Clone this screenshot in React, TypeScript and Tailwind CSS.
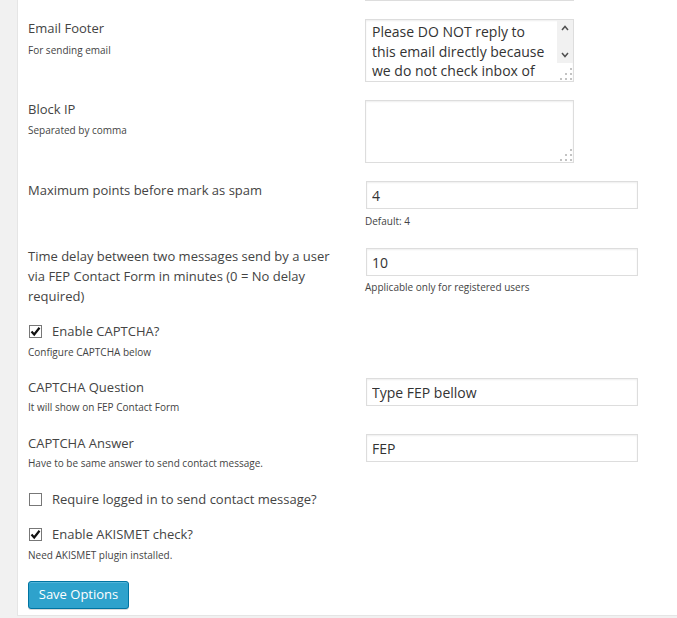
import type { ReactNode } from "react";

const labelCls = "text-[13px] leading-[20px] text-[#444]";
const descCls = "text-[10px] leading-[14px] text-[#444]";

function Grip() {
  return (
    <svg className="absolute right-0 bottom-0" width="13" height="13" viewBox="0 0 13 13">
      <rect x="10" y="0" width="2" height="2" fill="#c3c3c3" />
      <rect x="5" y="5" width="2" height="2" fill="#c3c3c3" />
      <rect x="10" y="5" width="2" height="2" fill="#c3c3c3" />
      <rect x="0" y="10" width="2" height="2" fill="#c3c3c3" />
      <rect x="5" y="10" width="2" height="2" fill="#c3c3c3" />
      <rect x="10" y="10" width="2" height="2" fill="#c3c3c3" />
    </svg>
  );
}

function TextArea({ lines, scroll }: { lines: string[]; scroll?: boolean }) {
  return (
    <div className="relative flex h-[63px] w-[209px] overflow-hidden border border-[#ddd] bg-white shadow-[inset_0_1px_2px_rgba(0,0,0,0.07)]">
      <div className="flex-1 overflow-hidden pt-[2px] pl-[6px] text-[14px] leading-[19.5px] text-[#333]">
        {lines.map((l) => (
          <div key={l} className="whitespace-nowrap">
            {l}
          </div>
        ))}
      </div>
      {scroll && (
        <div className="flex h-[43px] w-[16px] flex-col items-center justify-between bg-[#f1f1f1] py-[5px]">
          <svg width="8" height="6" viewBox="0 0 8 6">
            <path d="M1 5 L4 1.5 L7 5" fill="none" stroke="#505050" strokeWidth="1.5" />
          </svg>
          <svg width="8" height="6" viewBox="0 0 8 6">
            <path d="M1 1 L4 4.5 L7 1" fill="none" stroke="#505050" strokeWidth="1.5" />
          </svg>
        </div>
      )}
      <Grip />
    </div>
  );
}

function TextInput({ value }: { value: string }) {
  return (
    <input
      readOnly
      defaultValue={value}
      className="ml-px block h-[28px] w-[272px] border border-[#ddd] bg-white pl-[5px] text-[14px] text-[#333] shadow-[inset_0_1px_2px_rgba(0,0,0,0.07)] outline-none"
    />
  );
}

function Check({ checked, label }: { checked: boolean; label: string }) {
  return (
    <div className="flex items-center">
      <span className="mt-px ml-px flex h-[13px] w-[13px] items-center justify-center border border-[#777] bg-white">
        {checked && (
          <svg width="11" height="11" viewBox="0 0 11 11">
            <path d="M1.5 5.5 L4.2 8.5 L9.5 1.8" fill="none" stroke="#111" strokeWidth="2.2" />
          </svg>
        )}
      </span>
      <span className={`ml-[10px] ${labelCls}`}>{label}</span>
    </div>
  );
}

function Row({ h, left, right }: { h: string; left: ReactNode; right?: ReactNode }) {
  return (
    <div className={`grid grid-cols-[337px_1fr] ${h}`}>
      <div className="w-[315px]">{left}</div>
      <div>{right}</div>
    </div>
  );
}

export default function App() {
  return (
    <div className="flex h-[618px] w-[677px] overflow-hidden bg-[#f1f1f1] font-['Open_Sans',sans-serif]">
      <div className="w-[17px] shrink-0" />
      <div className="h-[616px] flex-1 border-b border-l border-[#e5e5e5] bg-white pl-[10px]">
        <div className="h-[18px]">
          <div className="ml-[337px] h-px w-[209px] bg-[#ddd]" />
        </div>

        <Row
          h="h-[81px]"
          left={
            <>
              <div className={labelCls}>Email Footer</div>
              <div className={`mt-[5px] ${descCls}`}>For sending email</div>
            </>
          }
          right={
            <div className="mt-px">
              <TextArea
                scroll
                lines={["Please DO NOT reply to", "this email directly because", "we do not check inbox of"]}
              />
            </div>
          }
        />

        <Row
          h="h-[81px]"
          left={
            <>
              <div className={labelCls}>Block IP</div>
              <div className={`mt-[4px] ${descCls}`}>Separated by comma</div>
            </>
          }
          right={
            <div className="mt-px">
              <TextArea lines={[]} />
            </div>
          }
        />

        <Row
          h="h-[66px]"
          left={<div className={labelCls}>Maximum points before mark as spam</div>}
          right={
            <div className="mt-px">
              <TextInput value="4" />
              <div className={`mt-[5px] ${descCls}`}>Default: 4</div>
            </div>
          }
        />

        <Row
          h="h-[75px]"
          left={
            <div className={labelCls}>
              Time delay between two messages send by a user via FEP Contact Form in minutes (0 = No delay required)
            </div>
          }
          right={
            <div className="mt-[2px]">
              <TextInput value="10" />
              <div className={`mt-[4px] ${descCls}`}>Applicable only for registered users</div>
            </div>
          }
        />

        <div className="h-[56px]">
          <Check checked label="Enable CAPTCHA?" />
          <div className={`mt-[4px] ${descCls}`}>Configure CAPTCHA below</div>
        </div>

        <Row
          h="h-[56px]"
          left={
            <>
              <div className={labelCls}>CAPTCHA Question</div>
              <div className={`mt-[3px] ${descCls}`}>It will show on FEP Contact Form</div>
            </>
          }
          right={
            <div className="mt-px">
              <TextInput value="Type FEP bellow" />
            </div>
          }
        />

        <Row
          h="h-[56px]"
          left={
            <>
              <div className={labelCls}>CAPTCHA Answer</div>
              <div className={`mt-[3px] ${descCls}`}>Have to be same answer to send contact message.</div>
            </>
          }
          right={
            <div className="mt-px">
              <TextInput value="FEP" />
            </div>
          }
        />

        <div className="h-[35px]">
          <Check checked={false} label="Require logged in to send contact message?" />
        </div>

        <div className="h-[57px]">
          <Check checked label="Enable AKISMET check?" />
          <div className={`mt-[4px] ${descCls}`}>Need AKISMET plugin installed.</div>
        </div>

        <button className="h-[28px] w-[101px] rounded-[3px] border border-[#0074a2] bg-[#2ea2cc] text-[13px] text-white shadow-[inset_0_1px_0_rgba(120,200,230,0.5),0_1px_0_rgba(0,0,0,0.15)]">
          Save Options
        </button>
      </div>
    </div>
  );
}
